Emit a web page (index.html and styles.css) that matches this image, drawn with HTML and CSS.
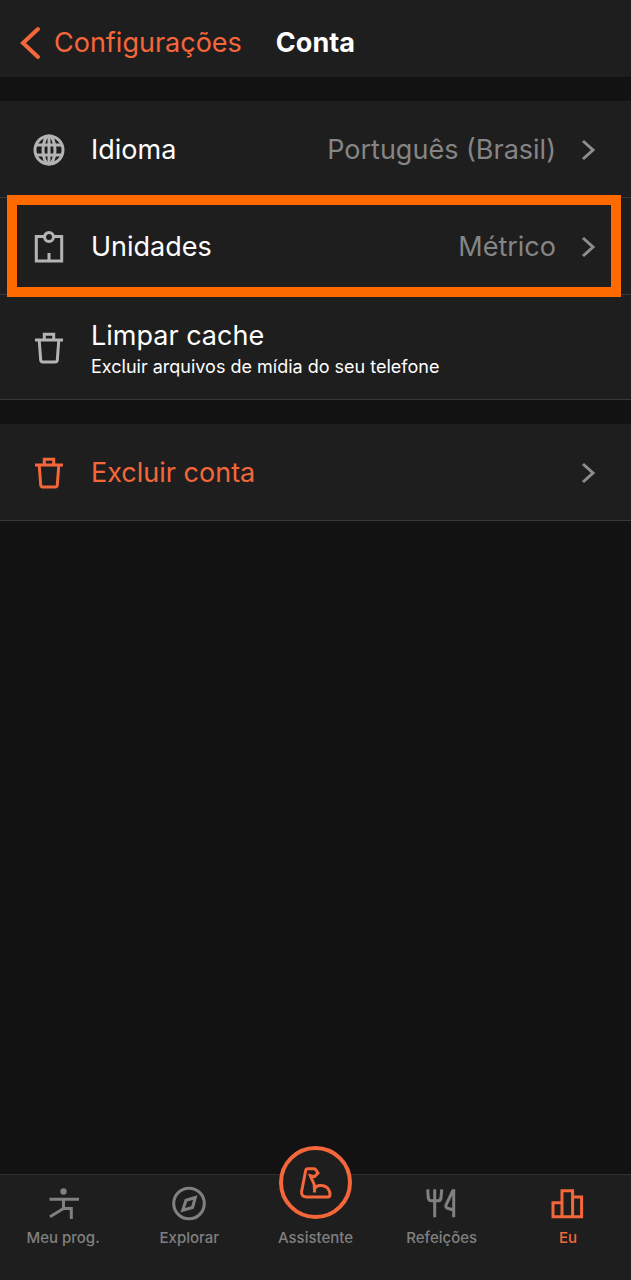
FILE: index.html
```html
<!DOCTYPE html>
<html lang="pt-BR">
<head>
    <meta charset="UTF-8">
    <meta name="viewport" content="width=device-width, initial-scale=1.0">
    <title>Conta</title>
    <link rel="stylesheet" href="styles.css">
</head>
<body>
    <header class="header">
        <a class="back" href="#">
            <svg class="back-icon" viewBox="0 0 24 36"><path d="M19 4 L4 18 L19 32"/></svg>
            Configurações
        </a>
        <h1>Conta</h1>
    </header>

    <main class="content">
        <div class="group">
            <a class="row" href="#">
                <svg class="icon" viewBox="0 0 36 36">
                    <circle cx="18" cy="18" r="14"/>
                    <ellipse cx="18" cy="18" rx="6" ry="14"/>
                    <path d="M18 4 V32 M5 13 H31 M5 23 H31"/>
                </svg>
                <span class="label">Idioma</span>
                <span class="value">Português (Brasil)</span>
                <svg class="chevron" viewBox="0 0 16 24"><path d="M3 3 L13 12 L3 21"/></svg>
            </a>
            <a class="row highlighted" href="#">
                <svg class="icon" viewBox="0 0 36 36">
                    <path d="M13 7.5 H5.3 V32 H30.7 V7.5 H23 M18 32 V24"/>
                    <circle cx="18" cy="8" r="4.5"/>
                </svg>
                <span class="label">Unidades</span>
                <span class="value">Métrico</span>
                <svg class="chevron" viewBox="0 0 16 24"><path d="M3 3 L13 12 L3 21"/></svg>
            </a>
            <button class="row" type="button">
                <svg class="icon" viewBox="0 0 36 36">
                    <path d="M4 10 H32 M13.3 10 V4.3 H22.7 V10 M8.2 10 L9.7 30 Q9.8 32 12 32 H24 Q26.2 32 26.3 30 L27.8 10"/>
                </svg>
                <span class="label">
                    Limpar cache
                    <small>Excluir arquivos de mídia do seu telefone</small>
                </span>
            </button>
        </div>

        <div class="group">
            <a class="row danger" href="#">
                <svg class="icon" viewBox="0 0 36 36">
                    <path d="M4 10 H32 M13.3 10 V4.3 H22.7 V10 M8.2 10 L9.7 30 Q9.8 32 12 32 H24 Q26.2 32 26.3 30 L27.8 10"/>
                </svg>
                <span class="label">Excluir conta</span>
                <svg class="chevron" viewBox="0 0 16 24"><path d="M3 3 L13 12 L3 21"/></svg>
            </a>
        </div>
    </main>

    <nav class="tabs">
        <a class="tab" href="#">
            <svg class="icon" viewBox="0 0 36 36">
                <circle class="solid" cx="18.5" cy="5.5" r="3.2"/>
                <path d="M4.5 13.3 H34 M18.5 13.3 V22.5 H26.3 V33 M18.5 22.5 L5 30.7"/>
            </svg>
            Meu prog.
        </a>
        <a class="tab" href="#">
            <svg class="icon" viewBox="0 0 36 36">
                <circle cx="18" cy="17.5" r="15.3"/>
                <path d="M24.3 11.5 L21.5 21.5 L11.7 24.3 L15 14.3 Z"/>
            </svg>
            Explorar
        </a>
        <a class="tab" href="#">
            <span class="assistant">
                <svg class="icon" viewBox="0 0 36 36">
                    <path d="M9.5 3.8 H16.2 Q17.2 3.8 17.8 4.8 L20 8 L16.5 11.6 L12.3 10.6 L16.2 19.5 L16.6 27.5 V23.5 C18.5 20 24 19.6 27.5 21.6 Q32 24.5 32 29.5 Q32 32 29.7 32 H9 Q3 32 3.6 26.5 L7.7 5.5 Q8 3.8 9.5 3.8 Z"/>
                </svg>
            </span>
            Assistente
        </a>
        <a class="tab" href="#">
            <svg class="icon" viewBox="0 0 36 36">
                <path d="M3.7 3.3 L4.3 12 Q4.8 14.8 7.5 14.8 H14 Q16.7 14.8 17 12 L17.7 3.3 M10.7 3.3 V31.3 M29.7 3.3 V31.3 M29.2 4 L22 19 Q21.3 21.5 23.5 22.2 L29.7 24"/>
            </svg>
            Refeições
        </a>
        <a class="tab active" href="#">
            <svg class="icon" viewBox="0 0 36 36">
                <path d="M12 16.7 H3 V30.7 H31.6 V11 H22.6 M12 30.7 V4.7 H22.6 V30.7"/>
            </svg>
            Eu
        </a>
    </nav>
</body>
</html>
```
FILE: styles.css
```css
* {
    box-sizing: border-box;
}
body {
    margin: 0;
    min-height: 100vh;
    display: flex;
    flex-direction: column;
    background-color: #121212;
    color: #fff;
    font-family: Inter, "Liberation Sans", sans-serif;
    font-size: 27px;
    line-height: 32px;
}
a {
    color: inherit;
    text-decoration: none;
}
svg {
    flex-shrink: 0;
    fill: none;
    stroke: currentColor;
    stroke-width: 3;
}
.solid {
    fill: currentColor;
    stroke: none;
}
.header {
    display: flex;
    align-items: center;
    gap: 34px;
    padding: 25px 19px 16px;
    background-color: #1e1e1e;
}
.header h1 {
    margin: 0;
    font-size: 27px;
    font-weight: 700;
}
.back {
    display: flex;
    align-items: center;
    gap: 11px;
    color: #f5673a;
}
.back-icon {
    width: 24px;
    height: 36px;
    stroke-width: 4;
    stroke-linecap: round;
}
.content {
    flex: 1;
}
.group {
    margin-top: 24px;
    background-color: #1e1e1e;
}
.row {
    position: relative;
    display: flex;
    align-items: center;
    width: 100%;
    min-height: 97px;
    padding: 18px 35px 16px 31px;
    border: none;
    border-bottom: 1px solid #383838;
    background: none;
    color: #fff;
    font: inherit;
    text-align: left;
    cursor: pointer;
}
.icon {
    width: 36px;
    height: 36px;
}
.row .icon {
    margin-right: 24px;
    color: #b4b4b4;
}
.label {
    flex: 1;
}
.label small {
    display: block;
    font-size: 18px;
    line-height: 30px;
}
button.row {
    min-height: 105px;
}
button.row .label {
    padding-top: 6px;
}
.value {
    margin-right: 24px;
    color: #858585;
}
.chevron {
    width: 16px;
    height: 24px;
    color: #8e8e8e;
}
.row.danger,
.row.danger .icon {
    color: #f5673a;
}
.highlighted::after {
    content: "";
    position: absolute;
    z-index: 1;
    inset: -3px 10px -3px 7px;
    border: 10px solid #ff6a00;
}
.tabs {
    display: flex;
    height: 106px;
    border-top: 1px solid #303030;
    background-color: #1e1e1e;
}
.tab {
    flex: 1;
    display: flex;
    flex-direction: column;
    align-items: center;
    gap: 6px;
    padding-top: 11px;
    color: #808080;
    font-size: 15px;
    line-height: 20px;
    font-weight: 500;
}
.tab.active {
    color: #f5673a;
}
/* round button that rises above the tab bar */
.assistant {
    display: flex;
    align-items: center;
    justify-content: center;
    width: 73px;
    height: 73px;
    margin-top: -40px;
    margin-bottom: 3px;
    border: 4px solid #f5673a;
    border-radius: 50%;
    background-color: #1e1e1e;
    color: #f5673a;
}
```
